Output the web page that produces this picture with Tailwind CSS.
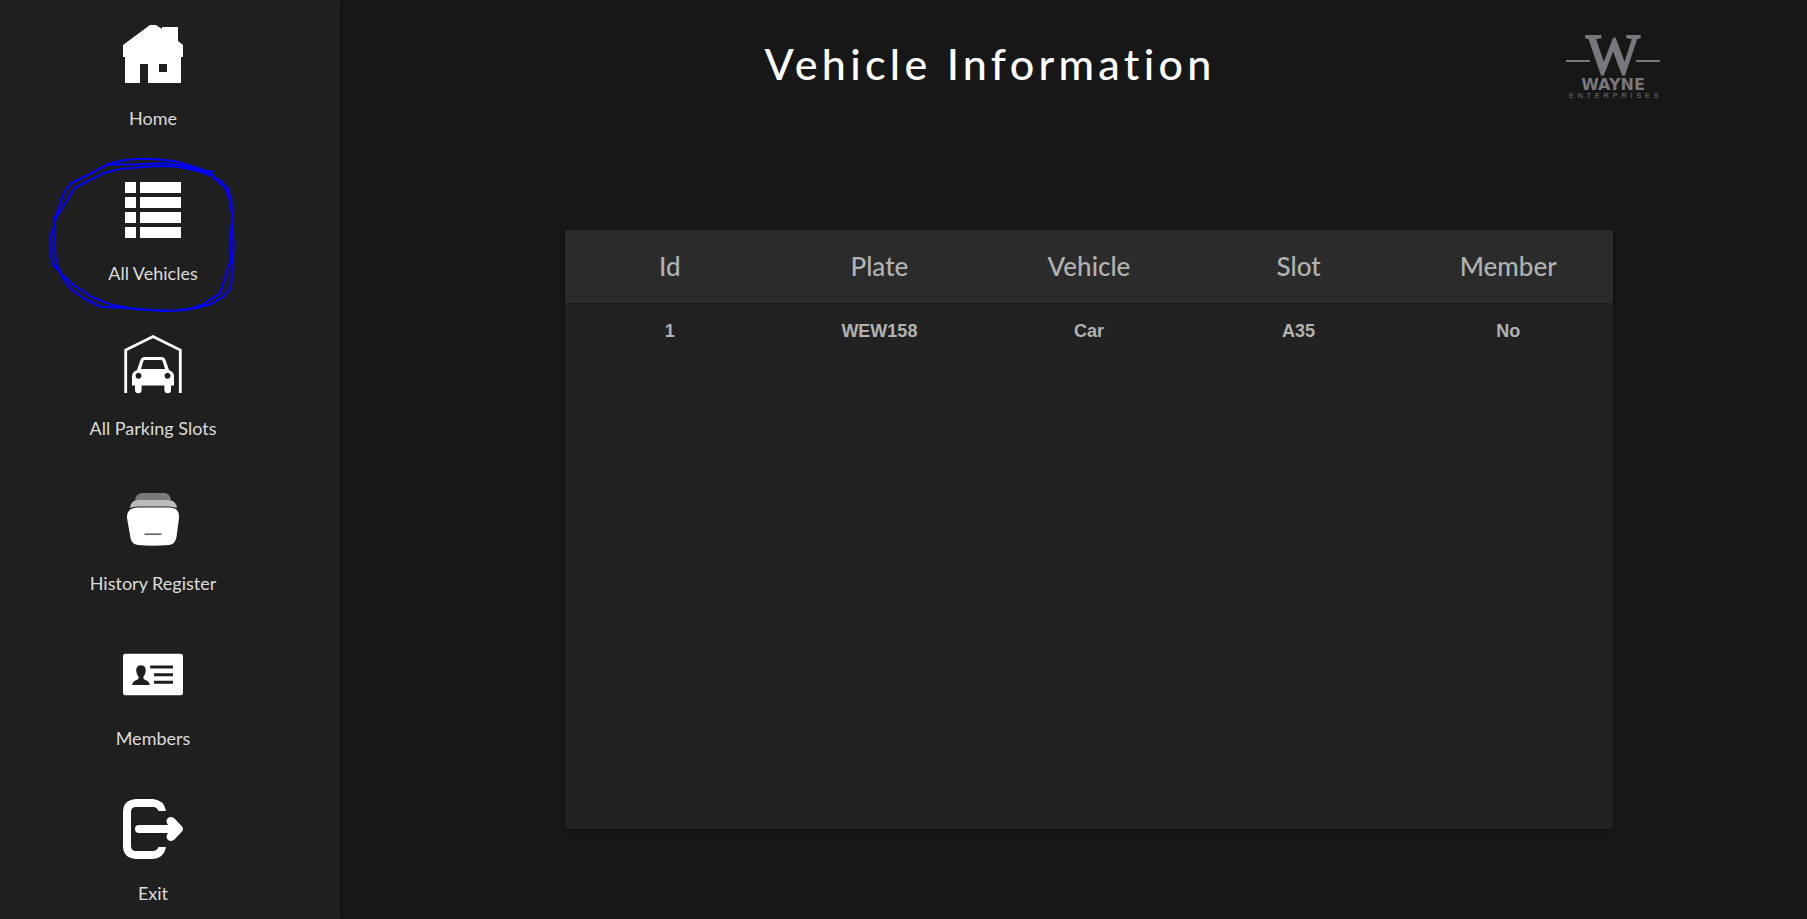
<!DOCTYPE html>
<html lang="en">
<head>
<meta charset="utf-8">
<title>Vehicle Information</title>
<script src="https://cdn.jsdelivr.net/npm/@tailwindcss/browser@4"></script>
</head>
<body class="flex min-h-screen bg-[#171717] font-[Lato,sans-serif] text-white">
<aside class="w-[340px] shrink-0 bg-[#1f1f1f] pr-[34px] shadow-sm shadow-black/50">
  <nav class="pt-6">
    <ul class="flex flex-col gap-[51px]">
      <li><a href="#home" class="flex flex-col items-center gap-6 text-lg leading-5 text-[#dcdcdc]">
        <svg class="size-[60px]" viewBox="0 0 60 60" fill="#fff" aria-hidden="true"><path fill-rule="evenodd" d="M27 1h6l6 4V3h16v14l5 4v12h-2v26H25V40h-8v19H2V33H0V21zM36 40v8h8v-8z"/></svg>
        <span>Home</span></a></li>
      <li class="relative"><a href="#vehicles" class="flex flex-col items-center gap-6 text-lg leading-5 text-[#dcdcdc]">
        <svg class="size-[60px]" viewBox="0 0 60 60" fill="#fff" aria-hidden="true"><path d="M2 3h11v11H2zM17 3h41v11H17zM2 18h11v11H2zM17 18h41v11H17zM2 33h11v11H2zM17 33h41v11H17zM2 48h11v11H2zM17 48h41v11H17z"/></svg>
        <span>All Vehicles</span></a>
        <svg class="pointer-events-none absolute -top-[29px] left-[40px] h-[170px] w-[220px]" viewBox="0 0 660 510" fill="none" stroke="#00f" stroke-width="6" stroke-linecap="round" stroke-linejoin="round" aria-hidden="true"><path d="M204 44L290 43L370 40L425 45L480 59L520 65"/><path d="M520 76L475 54L408 34L350 28L300 26L250 31L205 42L150 72L95 99L76 122L63 150L55 180L44 203L41 245L44 300L50 345L72 390L98 422L140 450L185 471L260 474L330 480L400 482L470 474L515 461L550 440L573 413L577 350L581 290L578 220L574 155L563 115L540 92L500 69L450 58L400 49L340 49L240 57L190 70L145 93L105 113L85 145L64 180L49 199L40 235L31 260L31 310L39 343L60 368L100 404L155 441L210 463L280 477L370 483L440 480L485 465L540 430L556 382L571 333L571 270L577 200L570 150L555 112L515 77L430 49"/></svg>
      </li>
      <li><a href="#slots" class="flex flex-col items-center gap-6 text-lg leading-5 text-[#dcdcdc]">
        <svg class="size-[60px]" viewBox="0 0 60 60" aria-hidden="true"><path d="M2.700 59V16L30 2.500 57.300 16V59" fill="none" stroke="#fff" stroke-width="2.800"/><path fill="#fff" fill-rule="evenodd" d="M14 36L17.500 26Q18.500 23 21.500 23h17Q41.500 23 42.500 26L46 36Q51 38 51 42V51.500H48V56a3.300 3.300 0 0 1-6.600 0V51.500H18.600V56a3.300 3.300 0 0 1-6.600 0V51.500H9V42Q9 38 14 36zM18 35H42L39.800 27.500Q39.500 26 38 26H22Q20.500 26 20.200 27.500zM15.500 38.700a3 3 0 1 0 .01 0zM44.500 38.700a3 3 0 1 0 .01 0z"/></svg>
        <span>All Parking Slots</span></a></li>
      <li><a href="#history" class="flex flex-col items-center gap-6 text-lg leading-5 text-[#dcdcdc]">
        <svg class="size-[60px]" viewBox="0 0 60 60" aria-hidden="true"><path fill="#7b7b7b" d="M12 11Q13 4 20 4H41Q47 4 48 11z"/><path fill="#bcbcbc" d="M7 19Q8 11 15 11H45Q53 11 54 19Q50 17.500 45 17.500H15Q10 17.500 7 19z"/><path fill="#fff" d="M15 18.500H46Q57 18.500 56 29L53.500 48Q52.500 55 46 56Q30 57.500 15 56Q8.500 55 7.500 49L4 29Q3.500 18.500 15 18.500z"/><path stroke="#666" stroke-width="1.700" d="M21.500 45.200h17"/></svg>
        <span>History Register</span></a></li>
      <li><a href="#members" class="flex flex-col items-center gap-6 text-lg leading-5 text-[#dcdcdc]">
        <svg class="size-[60px]" viewBox="0 0 60 60" aria-hidden="true"><rect y="9.800" width="60" height="41.400" rx="2.500" fill="#fff"/><path fill="#1f1f1f" d="M27.200 21.500H50v3H27.200zM31 29.300h19v3H31zM31 36.800h19v3H31zM18 21.300c3.800 0 5 2.800 4.700 6-.2 2.500-1.300 4-2.200 5v2.200c0 1.500 6.300 1.800 6.300 6.500H9.200c0-4.700 6.300-5 6.300-6.500v-2.200c-.9-1-2-2.500-2.200-5-.3-3.200.9-6 4.700-6z"/></svg>
        <span>Members</span></a></li>
      <li><a href="#exit" class="flex flex-col items-center gap-6 text-lg leading-5 text-[#dcdcdc]">
        <svg class="size-[60px]" viewBox="0 0 60 60" fill="#fff" aria-hidden="true"><path d="M13 0H30Q41 1 43 12H35.500Q34 8 30 8H13Q8 8 8 13V47Q8 52 13 52H30Q34 52 35.500 48H43Q41 59 30 60H13Q0 59 0 47V13Q0 1 13 0z"/><path d="M16 26H45Q42 22 45 19Q48.500 16.500 52 20L59 27.500Q61 30 59 32.500L52 40Q48.500 43.500 45 41Q42 38 45 34H16a4 4 0 0 1 0-8z"/></svg>
        <span>Exit</span></a></li>
    </ul>
  </nav>
</aside>
<main class="flex min-w-0 flex-1 flex-col pb-[90px]">
  <header class="flex items-start pt-[30px] pr-[143px] pl-[76px]">
    <h1 class="flex-1 pt-1 text-center text-[43px] leading-[60px] font-medium tracking-widest">Vehicle Information</h1>
    <svg class="h-[70px] w-[100px] overflow-visible" viewBox="0 0 100 70" fill="#77777d" role="img" aria-label="Wayne Enterprises"><path d="M2 30h24v2H2zM72 30h24v2H72z"/><text x="49" y="44" text-anchor="middle" font-family="Liberation Serif" font-size="57" stroke="#77777d" stroke-width="2">W</text><text x="49" y="60" text-anchor="middle" font-family="DejaVu Sans" font-weight="700" font-size="16">WAYNE</text><text x="5" y="68" font-family="Liberation Sans" font-size="7" letter-spacing="4">ENTERPRISES</text></svg>
  </header>
  <section class="mt-[130px] mr-[194px] ml-[225px] flex-1 bg-[#222] shadow-sm shadow-black/20">
    <table class="w-full table-fixed text-center text-[#b2b2b2]">
      <thead class="bg-[#2b2b2b] shadow-sm shadow-black/20">
        <tr class="h-[73px] text-[26px] leading-8"><th scope="col" class="pb-0.5 font-medium">Id</th><th scope="col" class="pb-0.5 font-medium">Plate</th><th scope="col" class="pb-0.5 font-medium">Vehicle</th><th scope="col" class="pb-0.5 font-medium">Slot</th><th scope="col" class="pb-0.5 font-medium">Member</th></tr>
      </thead>
      <tbody>
        <tr class="h-14 font-[Liberation_Sans,sans-serif] text-lg font-bold"><td>1</td><td>WEW158</td><td>Car</td><td>A35</td><td>No</td></tr>
      </tbody>
    </table>
  </section>
</main>
</body>
</html>
